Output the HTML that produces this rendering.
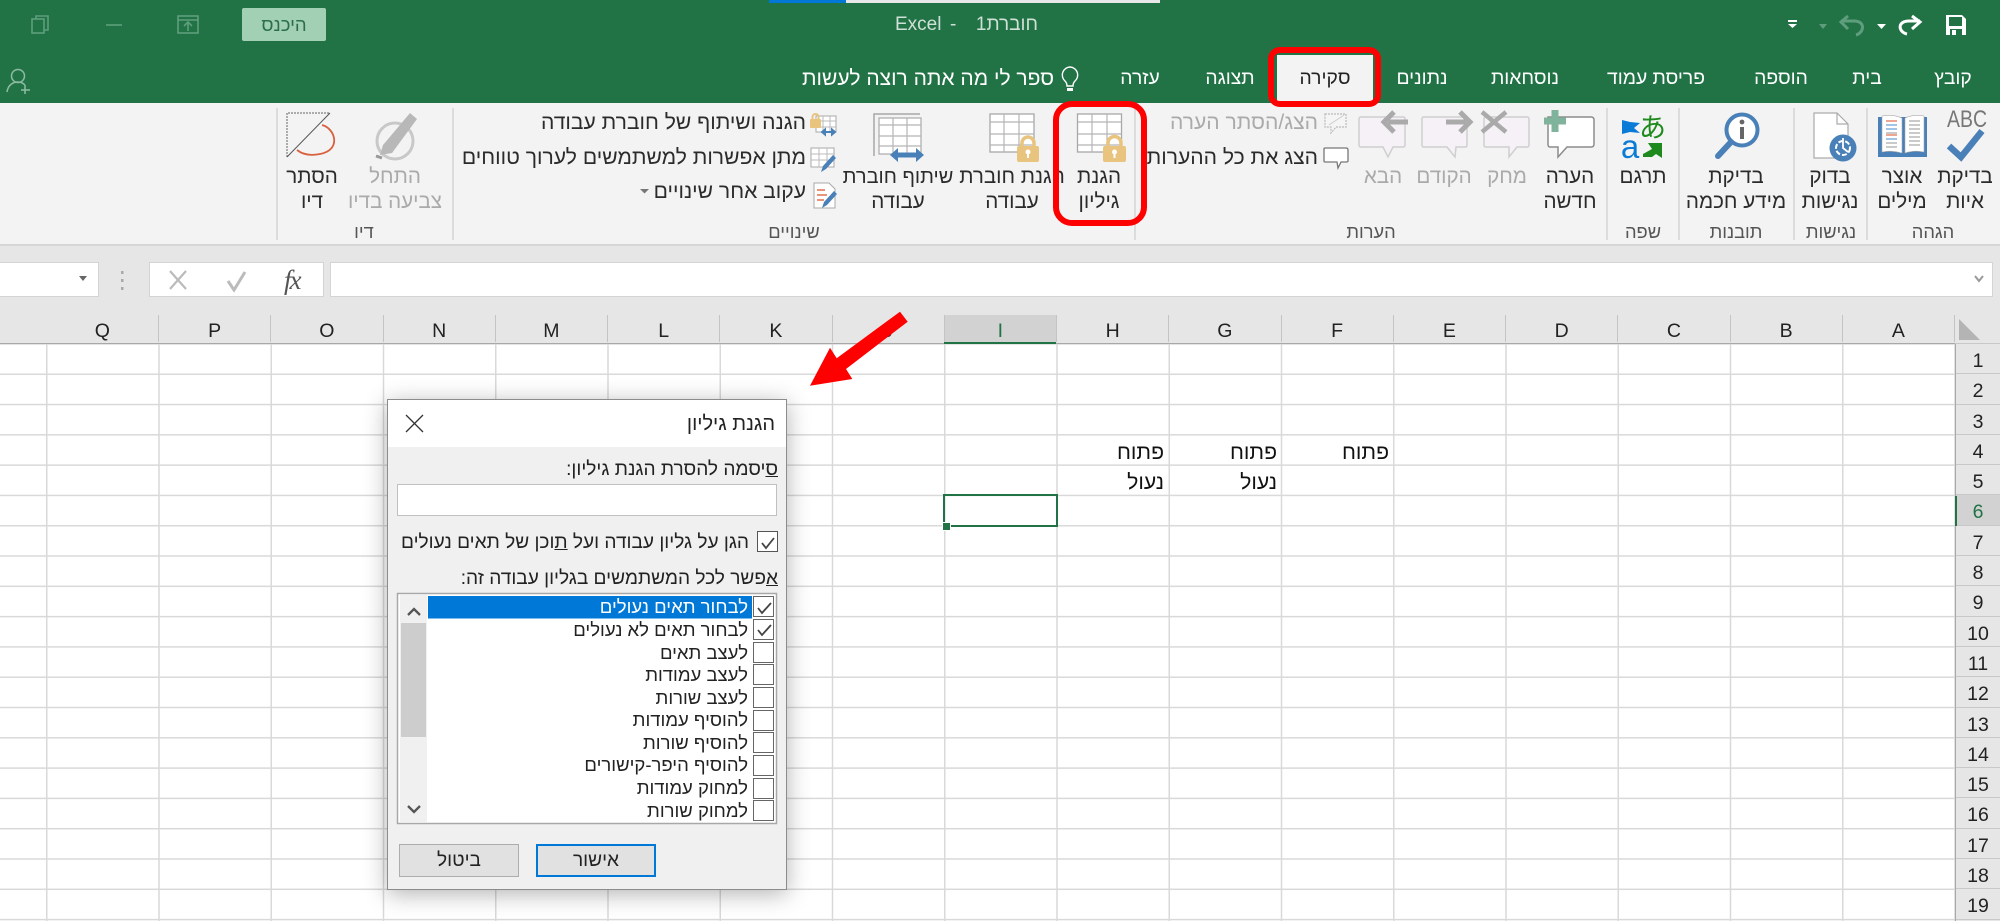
<!DOCTYPE html>
<html lang="he"><head><meta charset="utf-8"><title>Excel</title>
<style>
html,body{margin:0;padding:0;width:2000px;height:921px;overflow:hidden;background:#fff}
body{position:relative;font-family:"Liberation Sans","Noto Sans CJK JP",sans-serif;color:#222}
.a{position:absolute}
.t{position:absolute;white-space:nowrap;direction:rtl;line-height:24px;height:24px}
.c{transform:translateX(-50%);text-align:center}
.tab{font-size:19.3px;color:#fff;top:67px}
.big{font-size:20.6px;color:#2b2b2b}
.sm{font-size:21.1px;color:#2b2b2b}
.dim{color:#aaa}
.grp{font-size:18.3px;color:#555;top:220px}
.colh{position:absolute;left:0;top:315px;width:1955px;height:29px;background:#e6e6e6}
.col{position:absolute;top:315px;height:27px;width:112.25px;text-align:center;line-height:33px;font-size:19.5px;color:#222;border-right:1.5px solid #c4c4c4;box-sizing:border-box}
.rows{position:absolute;left:1955px;top:344px;width:45px;background:#e6e6e6;border-left:1.5px solid #a8a8a8;box-sizing:border-box;height:577px}
.rows div{height:30.3px;line-height:34px;text-align:center;font-size:19.5px;color:#222;box-sizing:border-box;border-bottom:1.5px solid #c8c8c8}
.grid{position:absolute;left:0;top:344px;width:1955px;height:577px;background-color:#fff;
background-image:linear-gradient(to right,#d9d9d9 1.5px,transparent 1.5px),linear-gradient(to bottom,#d9d9d9 1.5px,transparent 1.5px);
background-size:112.25px 30.3px;background-position:46px 29.5px}
.cell{font-size:21.2px;color:#111}
.dlg{position:absolute;left:387px;top:399px;width:400px;height:491px;background:#f0f0f0;border:1px solid #8c8c8c;box-sizing:border-box;box-shadow:0 4px 22px rgba(0,0,0,.3)}
.d{font-size:19.1px;color:#222}
.cb{position:absolute;left:753px;width:21px;height:21px;border:1.5px solid #666;box-sizing:border-box;background:#fff}
.li{font-size:18.5px;color:#222;right:1252px}
</style></head><body>

<!-- green title/tabs -->
<div class="a" style="left:0;top:0;width:2000px;height:103px;background:#217346"></div>
<div class="a" style="left:769px;top:0;width:77px;height:2.5px;background:#0078d7"></div>
<div class="a" style="left:846px;top:0;width:314px;height:2.5px;background:#e8e8e8"></div>
<div class="a" style="left:242px;top:8px;width:84px;height:33px;background:#a2d0b4;border-radius:2px"></div>
<div class="t c" style="left:284px;top:13px;font-size:18.5px;color:#2c6e4a">היכנס</div>
<div class="t" style="left:895px;top:13px;font-size:19px;color:#cfe0d6;direction:ltr">Excel</div>
<div class="t" style="left:950px;top:13px;font-size:19px;color:#cfe0d6;direction:ltr">-</div>
<div class="t" style="right:962px;top:13px;font-size:19px;color:#cfe0d6">חוברת1</div>

<div class="a" style="left:1277px;top:55px;width:96px;height:48px;background:#f3f3f3"></div>
<div class="t c tab" style="left:1953px">קובץ</div>
<div class="t c tab" style="left:1867px">בית</div>
<div class="t c tab" style="left:1781px">הוספה</div>
<div class="t c tab" style="left:1656px">פריסת עמוד</div>
<div class="t c tab" style="left:1525px">נוסחאות</div>
<div class="t c tab" style="left:1422px">נתונים</div>
<div class="t c tab" style="left:1325px;color:#222">סקירה</div>
<div class="t c tab" style="left:1230px">תצוגה</div>
<div class="t c tab" style="left:1140px">עזרה</div>
<div class="t tab" style="right:946px;font-size:21px">ספר לי מה אתה רוצה לעשות</div>

<!-- ribbon -->
<div class="a" style="left:0;top:103px;width:2000px;height:141px;background:#f3f3f3"></div>
<div class="a" style="left:0;top:244px;width:2000px;height:2px;background:#d6d6d6"></div>
<div class="a" style="left:0;top:246px;width:2000px;height:69px;background:#e6e6e6"></div>

<div class="t c big" style="left:1965px;top:165px">בדיקת</div><div class="t c big" style="left:1965px;top:190px">איות</div>
<div class="t c big" style="left:1902px;top:165px">אוצר</div><div class="t c big" style="left:1902px;top:190px">מילים</div>
<div class="t c big" style="left:1830px;top:165px">בדוק</div><div class="t c big" style="left:1830px;top:190px">נגישות</div>
<div class="t c big" style="left:1736px;top:165px">בדיקת</div><div class="t c big" style="left:1736px;top:190px">מידע חכמה</div>
<div class="t c big" style="left:1643px;top:165px">תרגם</div>
<div class="t c big" style="left:1570px;top:165px">הערה</div><div class="t c big" style="left:1570px;top:190px">חדשה</div>
<div class="t c big dim" style="left:1507px;top:165px">מחק</div>
<div class="t c big dim" style="left:1444px;top:165px">הקודם</div>
<div class="t c big dim" style="left:1383px;top:165px">הבא</div>
<div class="t sm dim" style="right:682px;top:111px">הצג/הסתר הערה</div>
<div class="t sm" style="right:682px;top:146px">הצג את כל ההערות</div>
<div class="t c big" style="left:1099px;top:165px">הגנת</div><div class="t c big" style="left:1099px;top:190px">גיליון</div>
<div class="t c big" style="left:1012px;top:165px">הגנת חוברת</div><div class="t c big" style="left:1012px;top:190px">עבודה</div>
<div class="t c big" style="left:898px;top:165px;font-size:20px">שיתוף חוברת</div><div class="t c big" style="left:898px;top:190px">עבודה</div>
<div class="t sm" style="right:1194px;top:111px">הגנה ושיתוף של חוברת עבודה</div>
<div class="t sm" style="right:1194px;top:146px">מתן אפשרות למשתמשים לערוך טווחים</div>
<div class="t sm" style="right:1194px;top:180px">עקוב אחר שינויים</div>
<div class="t c big dim" style="left:395px;top:165px">התחל</div><div class="t c big dim" style="left:395px;top:190px">צביעה בדיו</div>
<div class="t c big" style="left:312px;top:165px">הסתר</div><div class="t c big" style="left:312px;top:190px">דיו</div>

<div class="t c grp" style="left:1933px">הגהה</div>
<div class="t c grp" style="left:1831px">נגישות</div>
<div class="t c grp" style="left:1736px">תובנות</div>
<div class="t c grp" style="left:1643px">שפה</div>
<div class="t c grp" style="left:1371px">הערות</div>
<div class="t c grp" style="left:794px">שינויים</div>
<div class="t c grp" style="left:364px">דיו</div>

<!-- formula bar -->
<div class="a" style="left:0;top:262px;width:99px;height:35px;background:#fff;border:1px solid #d4d4d4;border-left:0;box-sizing:border-box"></div>
<div class="a" style="left:149px;top:262px;width:175px;height:35px;background:#fff;border:1px solid #d4d4d4;box-sizing:border-box"></div>
<div class="a" style="left:330px;top:262px;width:1663px;height:35px;background:#fff;border:1px solid #d4d4d4;box-sizing:border-box"></div>
<div class="a" style="left:284px;top:265px;font:italic 27px/30px 'Liberation Serif',serif;letter-spacing:-2px;color:#555">fx</div>

<!-- sheet -->
<div class="grid"></div>
<div class="colh"></div>
<div class="a" style="left:944px;top:315px;width:112px;height:29px;background:#d2d2d2"></div>
<div class="a" style="left:0;top:342.5px;width:1955px;height:1.5px;background:#a8a8a8"></div>
<div class="a" style="left:944px;top:341.5px;width:112px;height:2.5px;background:#217346"></div>
<div class="col" style="left:1842.75px">A</div><div class="col" style="left:1730.5px">B</div><div class="col" style="left:1618.25px">C</div><div class="col" style="left:1506px">D</div><div class="col" style="left:1393.75px">E</div><div class="col" style="left:1281.5px">F</div><div class="col" style="left:1169.25px">G</div><div class="col" style="left:1057px">H</div><div class="col" style="left:944.75px;color:#217346">I</div><div class="col" style="left:832.5px">J</div><div class="col" style="left:720.25px">K</div><div class="col" style="left:608px">L</div><div class="col" style="left:495.75px">M</div><div class="col" style="left:383.5px">N</div><div class="col" style="left:271.25px">O</div><div class="col" style="left:159px">P</div><div class="col" style="left:46.75px">Q</div>
<div class="a" style="left:1955px;top:315px;width:45px;height:29px;background:#e6e6e6;border-bottom:1.5px solid #c8c8c8;box-sizing:border-box"></div>
<div class="rows"><div>1</div><div>2</div><div>3</div><div>4</div><div>5</div><div style="background:#d2d2d2;color:#217346">6</div><div>7</div><div>8</div><div>9</div><div>10</div><div>11</div><div>12</div><div>13</div><div>14</div><div>15</div><div>16</div><div>17</div><div>18</div><div>19</div></div>
<div class="a" style="left:1954.5px;top:495.5px;width:2px;height:30.3px;background:#217346"></div>

<div class="t cell" style="right:611px;top:441px">פתוח</div>
<div class="t cell" style="right:723px;top:441px">פתוח</div>
<div class="t cell" style="right:836px;top:441px">פתוח</div>
<div class="t cell" style="right:723px;top:471px">נעול</div>
<div class="t cell" style="right:836px;top:471px">נעול</div>
<div class="a" style="left:943px;top:494px;width:115px;height:33px;border:2.2px solid #217346;box-sizing:border-box"></div>
<div class="a" style="left:941.5px;top:522px;width:7px;height:7px;background:#217346;border:1px solid #fff"></div>

<!-- icons -->
<svg class="a" style="left:0;top:0" width="2000" height="921" viewBox="0 0 2000 921" fill="none">
<!-- window controls -->
<g stroke="#5f9e7c" stroke-width="1.6"><rect x="32" y="19" width="12" height="14"/><path d="M36 19v-3h12v14h-4"/><path d="M106 25h16"/><rect x="178" y="16" width="20" height="17"/><path d="M178 20h20M188 31v-8M184 26l4-4 4 4"/></g>
<!-- QAT -->
<path d="M1946 15h16l4 4v16h-20z" fill="#fff"/><rect x="1949" y="17" width="13" height="9" fill="#217346"/><rect x="1950" y="29" width="12" height="6" fill="#217346"/><rect x="1952" y="30" width="4" height="5" fill="#fff"/>
<path d="M1907 34c-9-2-10-13 2-13h11" stroke="#fff" stroke-width="3"/><path d="M1912 16l8 6-8 7" stroke="#fff" stroke-width="3"/>
<path d="M1877 24h9l-4.500 5z" fill="#fff"/>
<path d="M1856 35c8-2 10-14-2-14h-13" stroke="#5f9e7c" stroke-width="3"/><path d="M1848 16l-7 6 7 7" stroke="#5f9e7c" stroke-width="3"/>
<path d="M1819 24h8l-4 5z" fill="#5f9e7c"/>
<path d="M1788 20h9v2h-9z" fill="#fff"/><path d="M1788 24h9l-4.500 4z" fill="#fff"/>
<!-- bulb -->
<path d="M1070 67a8 8 0 0 0-5 14c1.500 1.500 2 3 2 5h6c0-2 .5-3.500 2-5a8 8 0 0 0-5-14z" stroke="#fff" stroke-width="1.400"/><path d="M1067 88h6v3h-6z" fill="#fff"/>
<!-- person -->
<circle cx="18" cy="76" r="6.500" stroke="#8ebca3" stroke-width="1.500"/><path d="M7 92c1-7 6-10 11-10 3 0 5 1 7 3M25 85v9M21 90h9" stroke="#8ebca3" stroke-width="1.500"/>
<!-- separators -->
<g stroke="#d4d4d4" stroke-width="1.500"><path d="M1867 108v132M1794 108v132M1679 108v132M1607 108v132M1135 108v132M453 108v132M277 108v132"/></g>
<!-- spelling -->
<text x="1947" y="127" font-family="Liberation Sans" font-size="24" fill="#777" textLength="40" lengthAdjust="spacingAndGlyphs">ABC</text>
<path d="M1949 146l12 11 21-26" stroke="#4a80b8" stroke-width="6.500"/>
<!-- book -->
<path d="M1878 117h49v40h-49z" fill="#4a80b8"/><path d="M1882 116q10-2 20 2v35q-10-3-20-1zM1924 116q-10-2-19 2v35q9-3 19-1z" fill="#fff" stroke="#aaa" stroke-width=".6"/>
<path d="M1886 121h11M1886 135h11" stroke="#e07050" stroke-width="1.200"/><path d="M1886 125h11M1886 129h11M1886 139h11" stroke="#6aa0d8" stroke-width="1.200"/><path d="M1886 133h11M1886 143h11M1886 147h11" stroke="#aaa" stroke-width="1.200"/><path d="M1909 121h11M1909 125h11M1909 129h11M1909 133h11M1909 137h11M1909 141h11M1909 145h11" stroke="#aaa" stroke-width="1.200"/>
<!-- accessibility -->
<path d="M1814 113h23l11 11v34h-34z" fill="#fff" stroke="#aaa" stroke-width="1.200"/><path d="M1837 113v11h11" stroke="#aaa" stroke-width="1.200"/>
<circle cx="1843" cy="148" r="13.500" fill="#4a80b8"/><circle cx="1843" cy="148" r="7" stroke="#fff" stroke-width="2" stroke-dasharray="5 2"/><path d="M1843 138v10l5 4" stroke="#fff" stroke-width="1.800"/>
<!-- smart lookup -->
<circle cx="1742" cy="130" r="15.500" fill="#fff" stroke="#4a80b8" stroke-width="4"/><path d="M1731 142l-13 14" stroke="#4a80b8" stroke-width="6" stroke-linecap="round"/><circle cx="1742" cy="122" r="2.400" fill="#666"/><path d="M1742 127v12" stroke="#666" stroke-width="4"/>
<!-- translate -->
<path d="M1622 120l8 2 10 1-6 5 6 5-10-1-8 2z" fill="#0a7bd6"/><text x="1630" y="158" font-family="Liberation Sans" font-size="33" fill="#0a7bd6" text-anchor="middle">a</text>
<text x="1652.500" y="137" font-family="Noto Sans CJK JP" font-size="27" fill="#1e8a1e" text-anchor="middle">あ</text><path d="M1643 154l9-5-4-6h14v15l-6-4-4 3h-9z" fill="#1e8a1e"/>
<!-- new comment -->
<path d="M1548 117h43q3 0 3 3v24q0 3-3 3h-24l-9 10v-10h-8q-2 0-2-3z" fill="#fff" stroke="#8c8c8c" stroke-width="1.500"/><path d="M1555 110v22M1544 121h22" stroke="#7fb39b" stroke-width="7"/>
<!-- delete/prev/next -->
<g fill="#f5f1f6" stroke="#cfcfcf" stroke-width="1.500"><path d="M1486 117h41q2 0 2 2v26q0 2-2 2h-10l-8 10v-10h-23q-2 0-2-2v-26q0-2 2-2z"/><path d="M1424 117h41q2 0 2 2v26q0 2-2 2h-9l-1 10-8-10h-23q-2 0-2-2v-26q0-2 2-2z"/><path d="M1361 117h42q2 0 2 2v26q0 2-2 2h-10l-5 10-5-10h-22q-2 0-2-2v-26q0-2 2-2z"/></g>
<path d="M1482 112l24 20M1506 112l-24 20" stroke="#aaa" stroke-width="4.500"/>
<path d="M1446 122h20M1460 112l10 10-10 10" stroke="#aaa" stroke-width="5"/>
<path d="M1408 122h-20M1394 112l-10 10 10 10" stroke="#aaa" stroke-width="5"/>
<!-- small comments -->
<path d="M1325 114h21v13h-10l-5 6v-6h-6z" fill="#f5f5f5" stroke="#bbb" stroke-width="1.200" stroke-dasharray="2 1"/><path d="M1329 125l15-10" stroke="#ccc"/>
<path d="M1325 148h21q2 0 2 2v11q0 1-2 1h-5l-3 6-1-6h-12q-1 0-1-1v-12q0-1 1-1z" fill="#fff" stroke="#777" stroke-width="1.300"/>
<!-- protect sheet -->
<rect x="1077.500" y="114" width="44" height="38" fill="#fff" stroke="#a8a8a8" stroke-width="1.300"/>
<path d="M1078 122h43M1078 134h43M1078 145h43M1092 114v38M1107 114v38" stroke="#b5b5b5" stroke-width="1.200"/>
<rect x="1103" y="146" width="23" height="16" rx="2" fill="#e9c47f"/><path d="M1108 147v-4a6.500 6.500 0 0 1 13 0v4" stroke="#e9c47f" stroke-width="3.500"/><circle cx="1114.500" cy="152" r="2.500" fill="#fff"/><path d="M1114.500 153v5" stroke="#fff" stroke-width="2"/>
<!-- protect workbook -->
<rect x="990" y="114" width="44" height="38" fill="#fff" stroke="#a8a8a8" stroke-width="1.300"/>
<path d="M990 122h44M990 134h44M990 145h44M1004 114v38M1019 114v38" stroke="#b5b5b5" stroke-width="1.200"/>
<rect x="1017" y="146" width="22" height="16" rx="2" fill="#e9c47f"/><path d="M1022 147v-4a6 6 0 0 1 12 0v4" stroke="#e9c47f" stroke-width="3.500"/><circle cx="1028" cy="152" r="2.500" fill="#fff"/><path d="M1028 153v5" stroke="#fff" stroke-width="2"/>
<!-- share workbook -->
<path d="M874 156v-42h46" stroke="#a8a8a8" stroke-width="1.500"/><rect x="879" y="118" width="42" height="36" fill="#fff" stroke="#b0b0b0" stroke-width="1.300"/>
<path d="M879 125h42M879 136h42M879 146h42M893 118v36M907 118v36" stroke="#b5b5b5" stroke-width="1.200"/>
<path d="M898 148l-8 7 8 7zM916 148l8 7-8 7z" fill="#4a80b8"/><path d="M896 155h22" stroke="#4a80b8" stroke-width="5"/>
<!-- small change icons -->
<rect x="816" y="116" width="20" height="16" fill="#fff" stroke="#aaa"/><path d="M816 121h20M816 127h20M823 116v16M830 116v16" stroke="#bbb"/><rect x="810" y="119" width="11" height="9" rx="1" fill="#e9c47f"/><path d="M812.500 119v-2a3 3 0 0 1 6 0v2" stroke="#e9c47f" stroke-width="2"/><path d="M822 132h13M822 132l3-2.500v5zM835 132l-3-2.500v5z" stroke="#4a80b8" stroke-width="2"/>
<rect x="811" y="148" width="23" height="19" fill="#fff" stroke="#aaa"/><path d="M811 154h23M811 160h23M819 148v19M827 148v19" stroke="#bbb"/><path d="M821 172l2-6 10-11 3 3-10 11z" fill="#4a80b8"/>
<path d="M814 183h15l6 6v19h-21z" fill="#fff" stroke="#aaa"/><path d="M817 190h8M817 195h10M817 200h7" stroke="#e07050" stroke-width="1.500"/><path d="M822 208l2-6 10-11 3 3-10 11z" fill="#4a80b8"/>
<path d="M640 189h9l-4.500 4.500z" fill="#777"/>
<!-- ink -->
<circle cx="395" cy="141" r="18" stroke="#c8c8c8" stroke-width="3"/><path d="M380 155l3-10 27-32 7 6-25 34z" fill="#b8b8b8"/><path d="M376 156l6 2" stroke="#999" stroke-width="3"/>
<path d="M287 157V113h43" stroke="#666" stroke-width="1" stroke-dasharray="2 1"/><path d="M330 113l-43 44" stroke="#555" stroke-width="1"/><path d="M322 125C335 128 342 150 320 154 310 156 302 154 297 150" stroke="#d9603f" stroke-width="1.800"/>
<!-- red highlights -->
<rect x="1271" y="50" width="107" height="54" rx="9" stroke="#f00" stroke-width="6"/>
<rect x="1056" y="104" width="88" height="119" rx="16" stroke="#f00" stroke-width="6"/>
<!-- formula bar bits -->
<path d="M79 276h8l-4 5z" fill="#666"/>
<g fill="#aaa"><rect x="121" y="271" width="2.500" height="3"/><rect x="121" y="279" width="2.500" height="3"/><rect x="121" y="287" width="2.500" height="3"/></g>
<path d="M170 271l16 18M186 271l-16 18" stroke="#bbb" stroke-width="2.200"/>
<path d="M228 281l6 9 11-18" stroke="#bbb" stroke-width="3"/>
<path d="M1975 276l4 5 4-5" stroke="#999" stroke-width="2"/>
<!-- corner -->
<path d="M1959 319v21h21z" fill="#b4b4b4"/>
</svg>

<!-- dialog -->
<div class="dlg">
 <div class="a" style="left:0;top:0;width:398px;height:47px;background:#fff"></div>
</div>
<svg class="a" style="left:0;top:0" width="2000" height="921" viewBox="0 0 2000 921" fill="none">
<path d="M406 415l17 17M423 415l-17 17" stroke="#333" stroke-width="1.300"/>
<rect x="397.500" y="593.500" width="379" height="230" fill="#fff" stroke="#a8a8a8" stroke-width="1.500"/>
<rect x="400" y="595" width="27" height="227" fill="#f0f0f0"/><rect x="401" y="623" width="25" height="114" fill="#cdcdcd"/>
<path d="M408 615l6-6 6 6" stroke="#555" stroke-width="2.300"/><path d="M408 806l6 6 6-6" stroke="#555" stroke-width="2.300"/>
<rect x="428" y="596" width="324" height="22.500" fill="#0078d7"/>
</svg>
<div class="t" style="right:1225px;top:412px;font-size:20px;color:#222">הגנת גיליון</div>
<div class="t d" style="right:1222px;top:458px"><u>ס</u>יסמה להסרת הגנת גיליון:</div>
<div class="a" style="left:397px;top:484px;width:380px;height:32px;background:#fff;border:1.500px solid #c0c0c0;box-sizing:border-box"></div>
<div class="a" style="left:757px;top:531px;width:21px;height:21px;border:1.500px solid #555;box-sizing:border-box;background:#fff"></div>
<div class="t d" style="right:1251px;top:531px">הגן על גליון עבודה ועל <u>ת</u>וכן של תאים נעולים</div>
<div class="t d" style="right:1222px;top:567px"><u>א</u>פשר לכל המשתמשים בגליון עבודה זה:</div>

<div class="cb" style="top:596px"></div><div class="cb" style="top:619px"></div><div class="cb" style="top:641.500px"></div><div class="cb" style="top:664px"></div><div class="cb" style="top:687px"></div><div class="cb" style="top:709.500px"></div><div class="cb" style="top:732px"></div><div class="cb" style="top:755px"></div><div class="cb" style="top:777.500px"></div><div class="cb" style="top:800px"></div>
<div class="t li" style="top:595px;color:#fff">לבחור תאים נעולים</div>
<div class="t li" style="top:618px">לבחור תאים לא נעולים</div>
<div class="t li" style="top:641px">לעצב תאים</div>
<div class="t li" style="top:663px">לעצב עמודות</div>
<div class="t li" style="top:686px">לעצב שורות</div>
<div class="t li" style="top:708px">להוסיף עמודות</div>
<div class="t li" style="top:731px">להוסיף שורות</div>
<div class="t li" style="top:753px">להוסיף היפר-קישורים</div>
<div class="t li" style="top:776px">למחוק עמודות</div>
<div class="t li" style="top:799px">למחוק שורות</div>

<div class="a" style="left:536px;top:844px;width:120px;height:33px;background:#e1e1e1;border:2px solid #0078d7;box-sizing:border-box"></div>
<div class="a" style="left:399px;top:844px;width:120px;height:33px;background:#e1e1e1;border:1.500px solid #adadad;box-sizing:border-box"></div>
<div class="t c d" style="left:596px;top:849px">אישור</div>
<div class="t c d" style="left:459px;top:849px">ביטול</div>

<svg class="a" style="left:0;top:0" width="2000" height="921" viewBox="0 0 2000 921" fill="none">
<path d="M762 543l4 5 8-10" stroke="#444" stroke-width="1.800"/>
<path d="M758 608l4 5 9-10" stroke="#444" stroke-width="1.800"/>
<path d="M758 630l4 5 9-10" stroke="#444" stroke-width="1.800"/>
<!-- red arrow -->
<path d="M810 385.700L830 347.700L836.700 358.300L900 311.700L907.700 321.700L846 369L852.300 379Z" fill="#f00"/>
</svg>
</body></html>
